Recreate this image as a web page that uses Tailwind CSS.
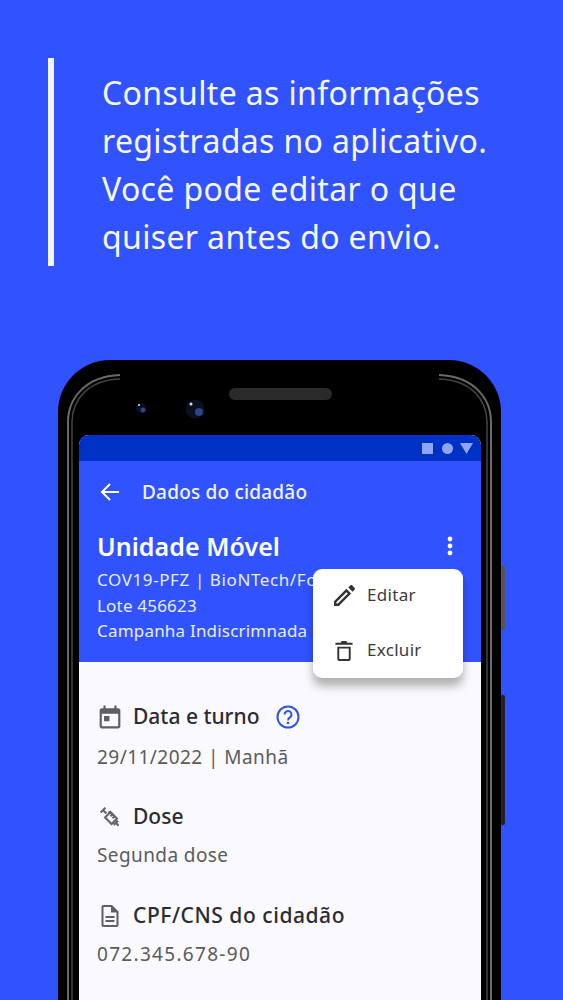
<!DOCTYPE html>
<html lang="pt-BR">
<head>
<meta charset="utf-8">
<script src="https://cdn.jsdelivr.net/npm/@tailwindcss/browser@4"></script>
</head>
<body class="m-0">
<div class="h-[1000px] w-[563px] overflow-hidden bg-[#3153ff] pt-[58px] font-['Noto_Sans',sans-serif]">
  <div class="ml-[48px] flex h-[208px] items-center border-l-[6px] border-[#f4f3ff] pt-[5px] pl-[48px]">
    <p class="text-[32px] leading-[48px] font-normal tracking-[0.35px] text-[#f6f6ff] whitespace-nowrap">Consulte as informações<br>registradas no aplicativo.<br>Você pode editar o que<br>quiser antes do envio.</p>
  </div>
  <div class="relative mt-[94px] ml-[58px] h-[640px] w-[448px]">
    <div class="absolute top-[206px] left-[443px] h-[64px] w-[4px] rounded-r-[2px] bg-[#555555]"></div>
    <div class="absolute top-[335px] left-[443px] h-[130px] w-[4px] rounded-r-[2px] bg-[#222222]"></div>
    <div class="h-full w-[443px] rounded-t-[52px] bg-black pt-[75px] pl-[21px]">
      <svg class="absolute top-0 left-0" width="443" height="640" viewBox="0 0 443 640" fill="none">
        <path d="M10 640V62C10 38 28 16 62 15" stroke="#6a6a6a" stroke-width="2"/>
        <path d="M14 640V62C14 40 30 20 62 19" stroke="#444" stroke-width="1.5"/>
        <path d="M433 640V62C433 38 415 16 381 15" stroke="#6a6a6a" stroke-width="2"/>
        <path d="M429 640V62C429 40 413 20 381 19" stroke="#444" stroke-width="1.5"/>
        <circle cx="83" cy="48" r="5" fill="#0a1020"/><circle cx="85" cy="50" r="2.500" fill="#2c4488"/><circle cx="81" cy="45" r="1" fill="#ddd"/>
        <circle cx="137" cy="49" r="9.500" fill="#0a1020"/><circle cx="141" cy="52" r="4" fill="#2c4488"/><circle cx="133" cy="44" r="1.500" fill="#ddd"/>
        <rect x="171" y="28" width="103" height="12" rx="6" fill="#2a2a2a"/>
      </svg>
      <div class="relative h-[565px] w-[402px] overflow-hidden rounded-t-[10px] bg-[#faf9fd]">
        <div class="flex h-[26px] items-center justify-end bg-[#0031c6] pr-[8px]">
          <span class="h-[11px] w-[11px] bg-[#8fa5ff]"></span>
          <span class="ml-[9px] h-[11px] w-[11px] rounded-full bg-[#8fa5ff]"></span>
          <svg class="ml-[7px]" width="13" height="11" viewBox="0 0 13 11"><path d="M0 0h13L6.500 11z" fill="#8fa5ff"/></svg>
        </div>
        <div class="h-[201px] bg-[#3153ff] text-white">
          <div class="flex h-[62px] items-center pl-[21px]">
            <svg width="20" height="20" viewBox="0 0 20 20" fill="none" stroke="#fff" stroke-width="2"><path d="M19 10H2M10 2l-8 8 8 8"/></svg>
            <span class="ml-[22px] text-[19px] font-medium tracking-[0.2px] text-[#f2f4ff]">Dados do cidadão</span>
          </div>
          <div class="flex items-center justify-between pt-[5px] pr-[28px] pl-[18px]">
            <span class="text-[25px] leading-[36px] font-semibold tracking-[0.05px]">Unidade Móvel</span>
            <svg width="6" height="20" viewBox="0 0 6 20" fill="#fff"><circle cx="3" cy="3" r="2.400"/><circle cx="3" cy="10" r="2.400"/><circle cx="3" cy="17" r="2.400"/></svg>
          </div>
          <div class="pt-[3px] pl-[18px] text-[17px] leading-[25.5px] tracking-[0.2px] text-[#e9ecff]">
            <p class="tracking-[0.6px] whitespace-nowrap">COV19-PFZ | BioNTech/Fosun</p>
            <p>Lote 456623</p>
            <p>Campanha Indiscrimnada</p>
          </div>
        </div>
        <div class="pt-[39px] pl-[18px] text-[#2b2b30]">
          <div class="flex h-[32px] items-center">
            <svg class="ml-[2px]" width="22" height="24" viewBox="0 0 20 22" fill="#5f5f63"><path d="M17.500 3H16V0.500h-2V3H6V0.500H4V3H2.500C1.400 3 .5 3.900.5 5v14.500c0 1.100.9 2 2 2h15c1.100 0 2-.9 2-2V5c0-1.100-.9-2-2-2zm0 16.500h-15V8h15v11.500zM4.500 10h5v5h-5z"/></svg>
            <span class="ml-[12px] text-[21px] font-medium">Data e turno</span>
            <svg class="ml-[17px]" width="24" height="24" viewBox="0 0 24 24" fill="none"><circle cx="12" cy="12" r="10.500" stroke="#3153e6" stroke-width="2"/><path d="M8.500 9.500a3.500 3.500 0 1 1 5.500 2.900c-1.200.8-2 1.500-2 3" stroke="#3153e6" stroke-width="2"/><circle cx="12" cy="18" r="1.300" fill="#3153e6"/></svg>
          </div>
          <p class="pt-[8px] text-[19px] leading-[32px] tracking-[0.45px] text-[#5b5b60]">29/11/2022 | Manhã</p>
          <div class="mt-[28px] flex h-[32px] items-center">
            <svg class="ml-[2px]" width="23" height="23" viewBox="0 0 24 24" fill="none" stroke="#66666a" stroke-width="2.200"><g transform="rotate(45 12 12)"><path d="M1 8.500v7M1 12h5M6 9h3M8 8h9.500v8H8zM17.500 10h2.500v4h-2.500M20 12h4M11 8v3M14 8v3"/></g></svg>
            <span class="ml-[11px] text-[21px] font-medium">Dose</span>
          </div>
          <p class="pt-[6px] text-[19px] leading-[32px] tracking-[0.4px] text-[#5b5b60]">Segunda dose</p>
          <div class="mt-[29px] flex h-[32px] items-center">
            <svg class="ml-[4px]" width="18" height="22" viewBox="0 0 18 22" fill="#5f5f63"><path d="M11 0H2.500C1.400 0 .5.900.5 2v18c0 1.100.9 2 2 2h13c1.100 0 2-.9 2-2V6.500L11 0zm4.500 20h-13V2H10v5.500h5.500V20zM4.500 11h9v2h-9zM4.500 15h9v2h-9z"/></svg>
            <span class="ml-[14px] text-[21px] font-medium tracking-[0.55px]">CPF/CNS do cidadão</span>
          </div>
          <p class="pt-[6px] text-[19px] leading-[32px] tracking-[1.3px] text-[#5b5b60]">072.345.678-90</p>
        </div>
        <div class="absolute top-[134px] left-[234px] flex h-[109px] w-[150px] flex-col justify-center gap-[23px] rounded-[9px] bg-white pb-[2px] pl-[21px] text-[17px] leading-[32px] tracking-[0.3px] text-[#3a3a3e] shadow-[0_8px_10px_rgba(0,0,0,0.3)]">
          <div class="flex items-center gap-[12px]">
            <svg width="21" height="21" viewBox="0 0 22 22" fill="#333"><path d="M0 22v-5L13 4l5 5L5 22zm2.500-2.500h1.500L14.500 9 13 7.500 2.500 18zM15 2.500l2-2c.6-.6 1.400-.6 2 0l2.500 2.500c.6.6.6 1.400 0 2l-2 2z"/></svg>
            <span>Editar</span>
          </div>
          <div class="flex items-center gap-[13px]">
            <svg class="mx-[1px]" width="18" height="21" viewBox="0 0 18 22" fill="#333"><path d="M0 3h5.500l1-2h5l1 2H18v2H0zM2 7h14v13a2 2 0 0 1-2 2H4a2 2 0 0 1-2-2zm2 2v11h10V9z"/></svg>
            <span>Excluir</span>
          </div>
        </div>
      </div>
    </div>
  </div>
</div>
</body>
</html>
